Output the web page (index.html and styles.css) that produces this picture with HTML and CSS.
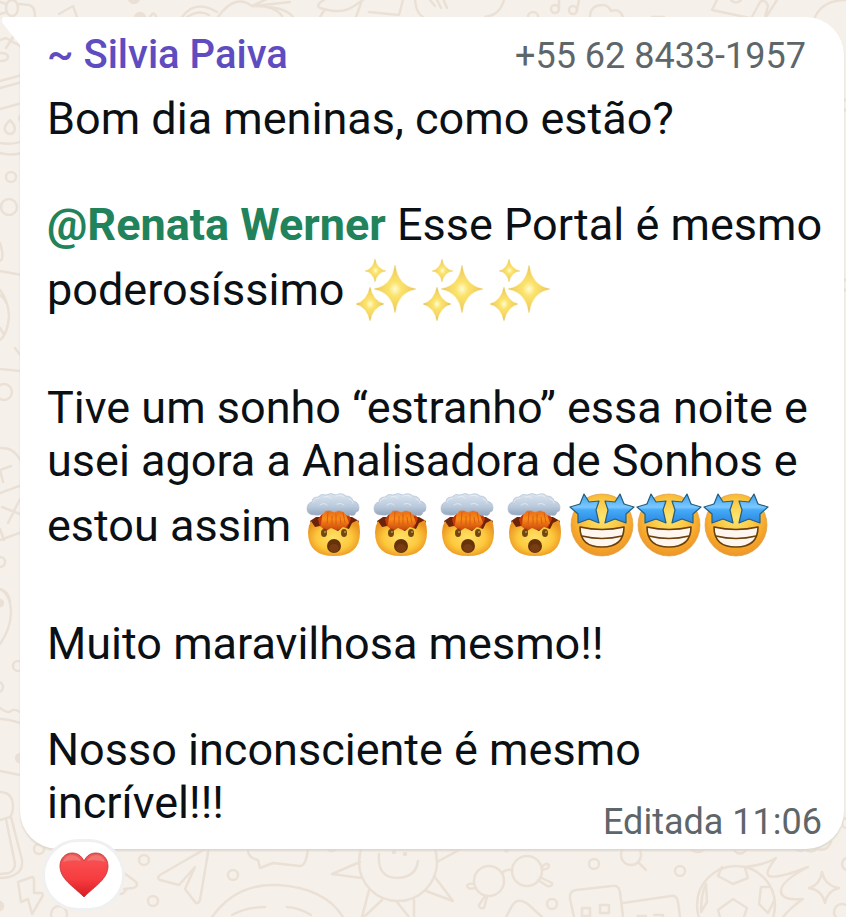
FILE: index.html
```html
<!DOCTYPE html>
<html lang="pt-BR">
<head>
  <meta charset="UTF-8" />
  <meta name="viewport" content="width=device-width, initial-scale=1.0" />
  <title>Conversa</title>
  <link rel="stylesheet" href="styles.css">
</head>
<body>
  <!-- wallpaper doodles -->
  <svg class="wallpaper" width="846" height="917" viewBox="0 0 846 917" aria-hidden="true">
    <!-- top strip -->
    <ellipse cx="12" cy="8" rx="6" ry="8" />
    <path d="M19 4l10 1q6 1 6 12M6 4L0 2M7 12L0 14M59 14l14-8 4 11M150 17q4-7 6 0M182 17q13-18 35-5M187 17q12-8 22-2M218 17q17-24 34-11 33 0 41 11M252 6l17-8M253 6l37-4M255 6q20 0 27 10" />
    <path d="M324 0q-9 5-4 8 22 7 34-2l9-6M325 9l-5 8M361 3l-5 14M369 12l30 3 4-15M415 0q1 13 8 17M430 0l5 6M437 0l4 8M444 1l3 7M504 0q-4 15-19 17" />
    <circle cx="533" cy="17" r="5" />
    <circle cx="555" cy="9" r="4" /><circle cx="573" cy="10" r="4" />
    <path d="M559 9V0M577 10l2-10M590 17q0-12 13-12 5 0 8 6 9-3 12 6M652 17h12M717 0l-5 10 38 8M731 0q5 5 10 0M752 17l8-15q5-4 8 4l-3 11M777 0l-11 17M815 17q8-17 31-17" />
    <circle class="dot" cx="134" cy="-2" r="5" /><circle class="dot" cx="140" cy="18" r="5" />
    <!-- left strip -->
    <path d="M0 40l6-2 14 8M6 48l9-14 5 12M0 53q8 0 8 4t-8 4M0 81l22-6M0 88l22-6M0 109l22-6M0 143q14 2 22-2M0 153q10 3 22 0M22 114q-6 4 0 8" />
    <path d="M10 120q-8 8-4 12 4 4 8 0 3-5-4-12z" />
    <circle cx="11" cy="177" r="5" /><circle cx="9" cy="207" r="8" />
    <path d="M0 243q5 15 0 18M0 271l22 4M0 295q5 4 6 8M0 290q9 12 9 27-2 18-9 23M0 328l3 5M15 348l6 8M0 369l20 2" />
    <circle cx="4" cy="392" r="8" />
    <path d="M0 448q14-1 20 12M0 470l11-4M0 470l3 12M0 493l22-8M2 507l18 7M20 499l-12 24M0 540l22-8M0 529l4 11" />
    <circle cx="0" cy="562" r="5" />
    <path d="M0 589q8 2 10 12M0 589q11 5 11 25-1 16-11 30" />
    <circle class="dot" cx="0" cy="603" r="3" />
    <circle cx="18" cy="666" r="5" /><circle cx="-2" cy="687" r="5" />
    <path d="M0 708q8 6 11 3t9 1M0 719q8 0 20 4M0 771l20 4" />
    <circle class="dot" cx="20" cy="758" r="4" />
    <path d="M0 792q12 0 13 13 0 9-3 12L0 820M6 819l9 45q0 6-6 9l-9 1M11 817l11 43q1 10-6 14-6 4-16 4" />
    <!-- bottom strip -->
    <path d="M18 882l14-5q2 0 2 4v12h7q3 0 1 4l-10 17-4-15-7 3z" />
    <path d="M124 873l11 8q5 5-2 7l-9 1M117 892q4 5 9-2" />
    <circle cx="39" cy="849" r="5" /><circle cx="59" cy="914" r="8" />
    <circle cx="144" cy="860" r="5" /><circle cx="153" cy="901" r="5" /><circle cx="233" cy="875" r="5" />
    <circle class="dot" cx="-1" cy="906" r="4" />
    <path d="M205 849q4-1 3 4l-8 47q-2 5-5 2l-10-13 10-22-16 18-19-5q-4-2 0-5z" />
    <path d="M248 850q0 8 10 10l2 8 13-5 27 3q6 0 8-17M212 917q24-34 66-32 47 3 65 32M232 915q14-8 33-8M287 907q13 1 24 8M327 849q5 4 9 0" />
    <circle cx="398" cy="862" r="39" />
    <path d="M379 854q-2 24 19 24 18-1 20-17M360 862l-28 12 29 4M437 862l22-12-12-1M434 876l19 25-27-10M369 890l-7 27M382 900l-18 17M397 902l12 15M414 900v17" />
    <circle class="dot" cx="394" cy="852" r="1" /><circle class="dot" cx="405" cy="854" r="1" />
    <circle cx="489" cy="881" r="15" /><circle cx="527" cy="871" r="15" />
    <path d="M503 872q3-3 9-2M474 884q-6-1-7 2 1 4 8 2M485 896l-6 9q0 4 5 3l3-11M542 867q4-5 7-2 0 5-7 4M540 877l12 6q1 4-5 3l-9-6M504 849q2 5 5 0M506 917l6-11q6-10 17-1l13 12" />
    <circle cx="552" cy="904" r="5" />
    <path d="M574 917l-4-18q-1-8 6-9l36-4q7-1 8 6l3 25M623 903l48-7q6-1 7 6l2 15M582 908h8v8h-8zM600 905h9v8h-9zM638 917v-1h8M654 915h9v2" />
    <circle cx="594" cy="864" r="5" /><circle cx="631" cy="855" r="10" /><path d="M639 863l7 7" />
    <circle cx="680" cy="871" r="5" />
    <path d="M690 849q8 6 15 0M733 849q7 9 14 0M795 849q6 4 10 0 6 5 12 0 10 3 14-7" />
    <circle cx="736" cy="905" r="39" />
    <path d="M722 867l-4 9 15 8 15-6-3-10M718 910l15-11 14 9-3 9M718 910l2 7M706 884q-5 10-5 28M706 884l1 18-6 10M769 887h-8l-2 17 9 9 6-12M745 867q20-2 31-9-12 15-7 18 8 3 39-9-27 14-27 24t22 8q-13 9-20 18" />
    <path d="M822 872q3 14 17 16-12 3-14 15-3-13-16-15 11-3 13-16z" />
    <circle cx="848" cy="864" r="6" /><circle cx="842" cy="912" r="8" />
    <circle cx="848" cy="105" r="6" /><circle cx="848" cy="285" r="6" /><circle cx="847" cy="823" r="5" />
  </svg>

  <!-- shared emoji shapes -->
  <svg class="sprite" aria-hidden="true">
    <defs>
      <radialGradient id="gold">
        <stop offset="0" stop-color="#fffbd2" />
        <stop offset=".3" stop-color="#fbe36b" />
        <stop offset=".75" stop-color="#f2d062" />
        <stop offset="1" stop-color="#cda653" />
      </radialGradient>
      <linearGradient id="cloud" x1="0" y1="0" x2="0" y2="1">
        <stop offset="0" stop-color="#dce5ef" />
        <stop offset=".6" stop-color="#b9c9dc" />
        <stop offset="1" stop-color="#93a5bd" />
      </linearGradient>
      <linearGradient id="blast" x1="0" y1="0" x2="0" y2="1">
        <stop offset="0" stop-color="#e0601a" />
        <stop offset=".5" stop-color="#fb8c17" />
        <stop offset="1" stop-color="#c9470f" />
      </linearGradient>
      <radialGradient id="face" cx=".5" cy=".5" r=".55">
        <stop offset="0" stop-color="#ffe168" />
        <stop offset=".6" stop-color="#fdc93d" />
        <stop offset="1" stop-color="#eb9420" />
      </radialGradient>
      <radialGradient id="round" cx=".5" cy=".38" r=".62">
        <stop offset="0" stop-color="#fbe670" />
        <stop offset=".5" stop-color="#fbc440" />
        <stop offset=".8" stop-color="#f5a42a" />
        <stop offset="1" stop-color="#ec962a" />
      </radialGradient>
      <linearGradient id="star" x1="0" y1="0" x2="0" y2="1">
        <stop offset="0" stop-color="#3fa0ee" />
        <stop offset=".45" stop-color="#7cc8ff" />
        <stop offset=".55" stop-color="#45aaf8" />
        <stop offset="1" stop-color="#2b87e0" />
      </linearGradient>
      <linearGradient id="heart" x1="0" y1="0" x2="0" y2="1">
        <stop offset="0" stop-color="#e85a58" />
        <stop offset=".25" stop-color="#f94b4d" />
        <stop offset=".6" stop-color="#f53c3f" />
        <stop offset="1" stop-color="#d91c22" />
      </linearGradient>
      <symbol id="sparkles" viewBox="0 0 67 77">
        <g fill="url(#gold)" stroke="#fdf2b4" stroke-width="1" paint-order="stroke">
          <path d="M42 14Q45 35 63 38 45 41 42 62 39 41 21 38 39 35 42 14z" />
          <path d="M17 36Q20 50 31 53 20 56 17 70 14 56 3 53 14 50 17 36z" />
          <path d="M22 8Q24 18 33 20 24 21 22 31 20 21 12 20 20 18 22 8z" />
        </g>
      </symbol>
      <symbol id="mind-blown" viewBox="0 0 67 77">
        <path fill="#6d220a" d="M10 34l6-4h36l7 4-3 9-20 4-22-4z" />
        <path fill="#c33b0d" d="M20 40l-2-8 4-5 3-5h19l4 4 3 6-4 9-9 2H26z" />
        <path fill="url(#blast)" d="M21 38q1-12 4-17h19q2 7 5 15l-4 5-5 1-3 1-4-1-4 1-5-2-5 1z" />
        <path fill="none" stroke="#cf5510" stroke-width=".8" d="M28 25l-1 12M32 29v9M36 27v11M40 30l1 7M43 25l2 11" />
        <path fill="url(#face)" d="M11 34l4 6 5-1 6 5 5-3 7 3 5-4 6 2 3-6 6-3q2 6 2 12 0 24-26 24T8 45q0-6 3-11z" />
        <ellipse cx="24" cy="46" rx="3" ry="4" fill="#704611" />
        <ellipse cx="44" cy="46" rx="3" ry="4" fill="#704611" />
        <circle cx="25" cy="45" r="1" fill="#b9914f" /><circle cx="45" cy="45" r="1" fill="#b9914f" />
        <ellipse cx="34" cy="59" rx="7" ry="7" fill="#66320c" />
        <ellipse cx="34" cy="61" rx="5" ry="4" fill="#783d12" />
        <path fill="url(#cloud)" stroke="#a9b9cd" stroke-width=".6" d="M15 28q-8 0-8-6 0-6 5-7 0-5 6-5 3-4 8-2 5-3 10 0 6-3 10 1 6 0 7 5 6 1 6 7 0 4-3 4-1 5-6 3-3 2-6-3-5-3-10 0-5-3-9-1-2 5-10 4z" />
        <path fill="none" stroke="#edf2f7" stroke-width="1" stroke-linecap="round" opacity=".7" d="M13 15q1-4 6-4M24 10q4-2 7 1M36 9q5-2 8 1M49 12q4 1 4 4M20 18q4-3 7 0M37 17q4-2 7 1" />
      </symbol>
      <symbol id="star-struck" viewBox="0 0 67 77">
        <circle cx="34" cy="38" r="31" fill="url(#round)" stroke="#dda045" stroke-width=".7" />
        <path fill="#fff7ef" stroke="#6b410b" stroke-width="1.6" stroke-linejoin="round" d="M12 40q22 5 44 0 0 20-22 20T12 40z" />
        <path fill="none" stroke="#6b410b" stroke-width="1.3" d="M14 49q20 5 40 0" />
        <g fill="url(#star)" stroke="#235f80" stroke-width="1.2" stroke-linejoin="round">
          <path d="M16 7l5 8 10-1-3 9 3 13-10-4-11 4 0-9-8-7 10-3z" />
          <path d="M52 7l-5 8-10-1 3 9-3 13 10-4 11 4 0-9 8-7-10-3z" />
        </g>
      </symbol>
    </defs>
  </svg>

  <main class="chat">
    <article class="bubble">
      <svg class="tail" width="20" height="30" viewBox="0 0 20 30" aria-hidden="true">
        <path d="M20 0H5Q1 0 2 4q0 2 2 4l16 20z" />
      </svg>

      <header class="sender">
        <span class="name">~ Silvia Paiva</span>
        <span class="phone">+55 62 8433-1957</span>
      </header>

      <div class="message">
        <p>Bom dia meninas, como estão?</p>
        <p>
          <a class="mention" href="#">@Renata Werner</a> Esse Portal é mesmo poderosíssimo
          <span class="emojis" role="img" aria-label="brilhos"><svg class="emoji"><use href="#sparkles" /></svg><svg class="emoji"><use href="#sparkles" /></svg><svg class="emoji"><use href="#sparkles" /></svg></span>
        </p>
        <p>
          Tive um sonho “estranho” essa noite e usei agora a Analisadora de Sonhos e estou assim
          <span class="emojis" role="img" aria-label="cabeça explodindo e olhos de estrela"><svg class="emoji"><use href="#mind-blown" /></svg><svg class="emoji"><use href="#mind-blown" /></svg><svg class="emoji"><use href="#mind-blown" /></svg><svg class="emoji"><use href="#mind-blown" /></svg><svg class="emoji"><use href="#star-struck" /></svg><svg class="emoji"><use href="#star-struck" /></svg><svg class="emoji"><use href="#star-struck" /></svg></span>
        </p>
        <p>Muito maravilhosa mesmo!!</p>
        <p>Nosso inconsciente é mesmo incrível!!!</p>
      </div>

      <footer class="meta">Editada <time>11:06</time></footer>
    </article>

    <button class="reaction" type="button" aria-label="Reação: coração">
      <svg width="50" height="46" viewBox="0 0 50 46" aria-hidden="true">
        <path fill="url(#heart)" stroke="#b93236" stroke-width=".8" d="M25 9C28 3 32 1 37 1c7 0 12 6 12 13 0 13-13 20-24 31C14 34 1 27 1 14 1 7 6 1 13 1c5 0 9 2 12 8z" />
        <path fill="#fff" opacity=".18" d="M4 10q2-7 9-7 7 1 9 6-8-2-18 1zM28 9q3-6 9-6 7 0 9 7-9-3-18-1z" />
      </svg>
    </button>
  </main>
</body>
</html>
```
FILE: styles.css
```css
/* --- basic reset ---------------------------------------------------- */
* {
  margin: 0;
  padding: 0;
  box-sizing: border-box;
}

:root {
  --wall: #f5f1ea;
  --doodle: #eae0d6;
  --text: #0b1014;
  --muted: #5e666a;
  --name: #5e4cc0;
  --mention: #21835b;
}

body {
  min-height: 100vh;
  position: relative;
  overflow-x: hidden;
  background: var(--wall);
  color: var(--text);
  font-family: Roboto, "Liberation Sans", sans-serif;
}

/* --- wallpaper ------------------------------------------------------ */
.wallpaper {
  position: absolute;
  top: 0;
  left: 0;
  fill: none;
  stroke: var(--doodle);
  stroke-width: 2.5;
  stroke-linecap: round;
  stroke-linejoin: round;
}

.wallpaper .dot {
  fill: var(--doodle);
}

.sprite {
  position: absolute;
  width: 0;
  height: 0;
}

/* --- bubble --------------------------------------------------------- */
.chat {
  position: relative;
  padding: 17px 2px 0 20px;
}

.bubble {
  position: relative;
  padding: 14px 18px 6px 27px;
  background: #fff;
  border-radius: 0 38px 38px 38px;
  box-shadow: 0 2px 2px #ddd7cf;
}

.tail {
  position: absolute;
  top: 0;
  left: -20px;
  fill: #fff;
}

.sender {
  display: flex;
  justify-content: space-between;
  align-items: baseline;
  padding-right: 20px;
  line-height: 48px;
}

.name {
  color: var(--name);
  font-size: 40px;
  font-weight: 500;
}

.phone {
  color: var(--muted);
  font-size: 36px;
}

.message {
  display: flex;
  flex-direction: column;
  gap: 53px;
  margin-top: 12px;
  font-size: 45px;
  line-height: 53px;
}

.mention {
  color: var(--mention);
  font-weight: 700;
  text-decoration: none;
}

.emojis {
  margin-left: -3px;
  white-space: nowrap;
}

.emoji {
  width: 67px;
  height: 77px;
  vertical-align: -23px;
}

.meta {
  margin-top: -28px;
  padding-right: 4px;
  color: var(--muted);
  font-size: 36px;
  line-height: 42px;
  text-align: right;
}

/* --- reaction ------------------------------------------------------- */
.reaction {
  position: relative;
  display: flex;
  align-items: center;
  justify-content: center;
  width: 83px;
  height: 72px;
  margin: -10px 0 0 22px;
  background: #fff;
  border: 3px solid #f0f0f0;
  border-radius: 36px;
  cursor: pointer;
}
```
